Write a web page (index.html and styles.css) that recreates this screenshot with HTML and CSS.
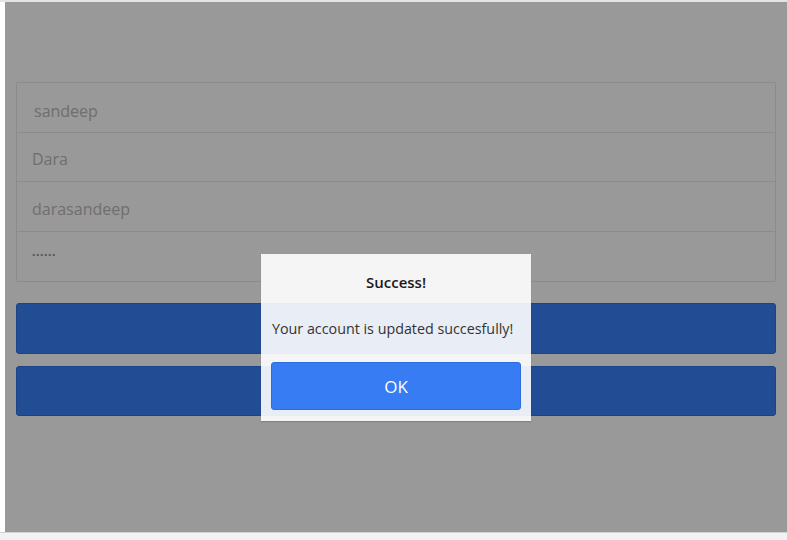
FILE: index.html
```html
<!DOCTYPE html>
<html>
<head>
<meta charset="utf-8">
<link rel="stylesheet" href="styles.css">
</head>
<body>
<div class="topline"></div>
<div class="frame">
  <div class="gutter"></div>
  <div class="app">
    <div class="content">
      <div class="fields">
        <div class="field first">sandeep</div>
        <div class="field short">Dara</div>
        <div class="field">darasandeep</div>
        <div class="field pw">······</div>
      </div>
      <div class="actions">
        <div class="btn"></div>
        <div class="btn second"></div>
      </div>
    </div>
    <div class="overlay"></div>
    <div class="dialog">
      <div class="title">Success!</div>
      <div class="message">Your account is updated succesfully!</div>
      <div class="ok">OK</div>
    </div>
  </div>
</div>
<div class="bottombar"></div>
</body>
</html>
```
FILE: styles.css
```css
html, body {
  margin: 0;
  padding: 0;
}
body {
  width: 787px;
  height: 540px;
  overflow: hidden;
  background: #ffffff;
  font-family: "Open Sans", "Noto Sans", sans-serif;
}
.topline {
  height: 2px;
  background: #e4e4e4;
}
.frame {
  display: flex;
  height: 530px;
}
.gutter {
  width: 5px;
  background: #ffffff;
}
.app {
  flex: 1;
  position: relative;
  background: #ffffff;
  overflow: hidden;
}
.content {
  padding: 80px 11px 0 11px;
}
.fields {
  border: 1px solid #e8e8e8;
  border-radius: 2px;
}
.field {
  height: 50px;
  box-sizing: border-box;
  display: flex;
  align-items: center;
  padding-left: 15px;
  padding-top: 4px;
  font-size: 16px;
  color: #b9b9b9;
  border-top: 1px solid #e8e8e8;
}
.field.first {
  height: 49px;
  border-top: none;
  padding-left: 17px;
  padding-top: 7px;
}
.field.short {
  height: 49px;
  padding-top: 3px;
}
.field.pw {
  color: #8a8a8a;
  font-size: 12px;
  letter-spacing: 0.6px;
  align-items: flex-start;
  padding-top: 14px;
  font-weight: bold;
}
.actions {
  margin-top: 21px;
  display: flex;
  flex-direction: column;
  gap: 12px;
}
.btn {
  height: 49px;
  background: #3a7ff7;
  border: 1px solid #2f6fe3;
  border-radius: 3px;
}
.btn.second {
  height: 48px;
}
.overlay {
  position: absolute;
  inset: 0;
  background: rgba(0, 0, 0, 0.4);
}
.dialog {
  position: absolute;
  top: 252px;
  left: 256px;
  width: 270px;
  height: 167px;
  box-sizing: border-box;
  background: rgba(255, 255, 255, 0.9);
  box-shadow: 0 1px 1px rgba(0, 0, 0, 0.15);
  padding: 18px 10px 11px 10px;
  display: flex;
  flex-direction: column;
}
.title {
  text-align: center;
  font-size: 15px;
  line-height: 20px;
  color: #1a1a1a;
  font-weight: 600;
}
.message {
  margin-top: 27px;
  padding-left: 1px;
  font-size: 14.3px;
  line-height: 20px;
  color: #333333;
  white-space: nowrap;
}
.ok {
  margin-top: 23px;
  height: 48px;
  box-sizing: border-box;
  background: #377cf2;
  border: 1px solid #2c6ee0;
  border-radius: 3px;
  color: #ffffff;
  font-size: 17px;
  display: flex;
  align-items: center;
  justify-content: center;
}
.bottombar {
  height: 8px;
  background: #f2f2f2;
  border-top: 1px solid #d2d2d2;
}
```
